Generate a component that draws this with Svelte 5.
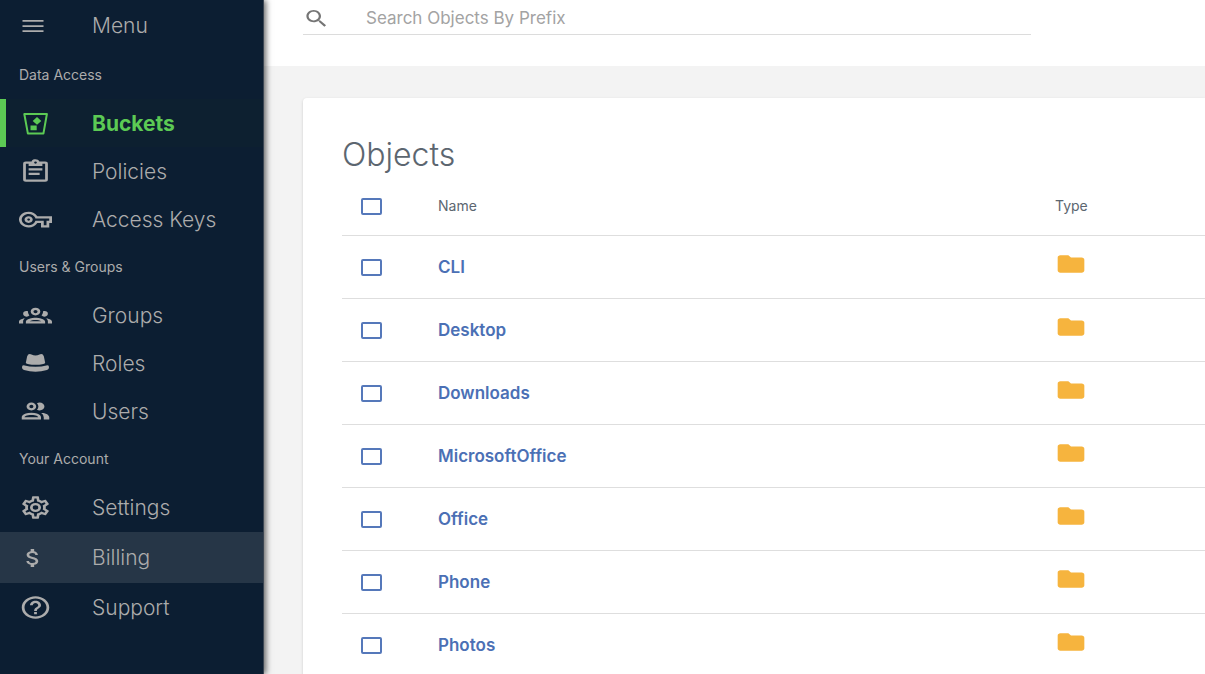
<script>
  const paths = {
    policies: 'M19 3H14.82C14.25 1.44 12.53.64 11 1.2C10.14 1.5 9.5 2.16 9.18 3H5A2 2 0 0 0 3 5V19A2 2 0 0 0 5 21H19A2 2 0 0 0 21 19V5A2 2 0 0 0 19 3M12 3A1 1 0 0 1 13 4A1 1 0 0 1 12 5A1 1 0 0 1 11 4A1 1 0 0 1 12 3M7 7H17V5H19V19H5V5H7V7M17 11H7V9H17V11M15 15H7V13H15V15Z',
    keys: 'M22 19h-6v-4h-2.68c-1.14 2.42-3.6 4-6.32 4-3.86 0-7-3.14-7-7s3.14-7 7-7c2.72 0 5.17 1.58 6.32 4H24v6h-2v4zm-4-2h2v-4h2v-2H11.94l-.23-.67C11.01 8.34 9.11 7 7 7c-2.76 0-5 2.24-5 5s2.24 5 5 5c2.11 0 4.01-1.34 4.71-3.33l.23-.67H18v4zM7 15c-1.65 0-3-1.35-3-3s1.35-3 3-3 3 1.35 3 3-1.35 3-3 3zm0-4c-.55 0-1 .45-1 1s.45 1 1 1 1-.45 1-1-.45-1-1-1z',
    groups: 'M12 5A3.5 3.5 0 0 0 8.5 8.5A3.5 3.5 0 0 0 12 12A3.5 3.5 0 0 0 15.5 8.5A3.5 3.5 0 0 0 12 5M12 7A1.5 1.5 0 0 1 13.5 8.5A1.5 1.5 0 0 1 12 10A1.5 1.5 0 0 1 10.5 8.5A1.5 1.5 0 0 1 12 7M5.5 8A2.5 2.5 0 0 0 3 10.5C3 11.44 3.53 12.25 4.29 12.68C4.65 12.88 5.06 13 5.5 13C5.94 13 6.35 12.88 6.71 12.68C7.08 12.47 7.39 12.17 7.62 11.81C6.89 10.86 6.5 9.7 6.5 8.5C6.5 8.41 6.5 8.31 6.5 8.22C6.2 8.08 5.86 8 5.5 8M18.5 8C18.14 8 17.8 8.08 17.5 8.22C17.5 8.31 17.5 8.41 17.5 8.5C17.5 9.7 17.11 10.86 16.38 11.81C16.5 12 16.63 12.15 16.78 12.3C16.94 12.45 17.1 12.58 17.29 12.68C17.65 12.88 18.06 13 18.5 13C18.94 13 19.35 12.88 19.71 12.68C20.47 12.25 21 11.44 21 10.5A2.5 2.5 0 0 0 18.5 8M12 14C9.66 14 5 15.17 5 17.5V19H19V17.5C19 15.17 14.34 14 12 14M4.71 14.55C2.78 14.78 0 15.76 0 17.5V19H3V17.07C3 16.06 3.69 15.22 4.71 14.55M19.29 14.55C20.31 15.22 21 16.06 21 17.07V19H24V17.5C24 15.76 21.22 14.78 19.29 14.55M12 16C13.53 16 15.24 16.5 16.23 17H7.77C8.76 16.5 10.47 16 12 16Z',
    users: 'M13.07 10.41A5 5 0 0 0 13.07 4.59A3.39 3.39 0 0 1 15 4A3.5 3.5 0 0 1 15 11A3.39 3.39 0 0 1 13.07 10.41M5.5 7.5A3.5 3.5 0 1 1 9 11A3.5 3.5 0 0 1 5.5 7.5M7.5 7.5A1.5 1.5 0 1 0 9 6A1.5 1.5 0 0 0 7.5 7.5M16 17V19H2V17S2 13 9 13 16 17 16 17M14 17C13.86 16.22 12.67 15 9 15S4.07 16.31 4 17M15.95 13A5.32 5.32 0 0 1 18 17V19H22V17S22 13.37 15.94 13Z',
    settings: 'M12 8A4 4 0 0 1 16 12A4 4 0 0 1 12 16A4 4 0 0 1 8 12A4 4 0 0 1 12 8M12 10A2 2 0 0 0 10 12A2 2 0 0 0 12 14A2 2 0 0 0 14 12A2 2 0 0 0 12 10M10 22C9.75 22 9.54 21.82 9.5 21.58L9.13 18.93C8.5 18.68 7.96 18.34 7.44 17.94L4.95 18.95C4.73 19.03 4.46 18.95 4.34 18.73L2.34 15.27C2.21 15.05 2.27 14.78 2.46 14.63L4.57 12.97L4.5 12L4.57 11L2.46 9.37C2.27 9.22 2.21 8.95 2.34 8.73L4.34 5.27C4.46 5.05 4.73 4.96 4.95 5.05L7.44 6.05C7.96 5.66 8.5 5.32 9.13 5.07L9.5 2.42C9.54 2.18 9.75 2 10 2H14C14.25 2 14.46 2.18 14.5 2.42L14.87 5.07C15.5 5.32 16.04 5.66 16.56 6.05L19.05 5.05C19.27 4.96 19.54 5.05 19.66 5.27L21.66 8.73C21.79 8.95 21.73 9.22 21.54 9.37L19.43 11L19.5 12L19.43 13L21.54 14.63C21.73 14.78 21.79 15.05 21.66 15.27L19.66 18.73C19.54 18.95 19.27 19.04 19.05 18.95L16.56 17.95C16.04 18.34 15.5 18.68 14.87 18.93L14.5 21.58C14.46 21.82 14.25 22 14 22H10M11.25 4L10.88 6.61C9.68 6.86 8.62 7.5 7.85 8.39L5.44 7.35L4.69 8.65L6.8 10.2C6.4 11.37 6.4 12.64 6.8 13.8L4.68 15.36L5.43 16.66L7.86 15.62C8.63 16.5 9.68 17.14 10.87 17.38L11.24 20H12.76L13.13 17.39C14.32 17.14 15.37 16.5 16.14 15.62L18.57 16.66L19.32 15.36L17.2 13.81C17.6 12.64 17.6 11.37 17.2 10.2L19.31 8.65L18.56 7.35L16.15 8.39C15.38 7.5 14.32 6.86 13.12 6.62L12.75 4H11.25Z',
    billing: 'M11.8 10.9c-2.27-.59-3-1.2-3-2.15 0-1.09 1.01-1.85 2.7-1.85 1.78 0 2.44.85 2.5 2.1h2.21c-.07-1.72-1.12-3.3-3.21-3.81V3h-3v2.16c-1.94.42-3.5 1.68-3.5 3.61 0 2.31 1.91 3.46 4.7 4.13 2.5.6 3 1.48 3 2.41 0 .69-.49 1.79-2.7 1.79-2.06 0-2.87-.92-2.98-2.1h-2.2c.12 2.19 1.76 3.42 3.68 3.83V21h3v-2.15c1.95-.37 3.5-1.5 3.5-3.55 0-2.84-2.43-3.81-4.7-4.4z',
    support: 'M11 18h2v-2h-2v2zm1-16C6.48 2 2 6.48 2 12s4.48 10 10 10 10-4.48 10-10S17.52 2 12 2zm0 18c-4.41 0-8-3.59-8-8s3.59-8 8-8 8 3.59 8 8-3.59 8-8 8zm0-14c-2.21 0-4 1.79-4 4h2c0-1.1.9-2 2-2s2 .9 2 2c0 2-3 1.75-3 5h2c0-2.25 3-2.5 3-5 0-2.21-1.79-4-4-4z'
  };

  const sections = [
    { label: 'Data Access', items: [['buckets', 'Buckets'], ['policies', 'Policies'], ['keys', 'Access Keys']] },
    { label: 'Users & Groups', items: [['groups', 'Groups'], ['roles', 'Roles'], ['users', 'Users']] },
    { label: 'Your Account', items: [['settings', 'Settings'], ['billing', 'Billing'], ['support', 'Support']] }
  ];

  const objects = ['CLI', 'Desktop', 'Downloads', 'MicrosoftOffice', 'Office', 'Phone', 'Photos'];

  let current = $state('buckets');
  let selected = $state([]);
  let query = $state('');
</script>

{#snippet icon(name)}
  {#if name === 'buckets'}
    <svg class="icon" viewBox="0 0 32 27" aria-hidden="true">
      <path d="M4.8 4H27.4L23.9 23.6H8.4Z" fill="none" stroke="currentColor" stroke-width="2" stroke-linejoin="round" />
      <path d="M17.5 7L21.8 11L17.5 14.8L13.2 11Z M11 15.6H17.2V20.2H11Z" />
    </svg>
  {:else if name === 'roles'}
    <svg class="icon" viewBox="0 0 32 27" aria-hidden="true">
      <path d="M6.3 13L7.6 6.4Q8.7 3.2 12 4.5Q16 6.3 20 4.5Q23.3 3.2 24.4 6.4L25.7 13Q24.5 14.8 16 14.8T6.3 13Z" />
      <path d="M4 15.3Q16 18.4 28 15.3Q29.6 15.3 29.5 17.5Q29.5 19.2 27.5 20Q16 23.6 4.5 20Q2.5 19.2 2.5 17.5Q2.4 15.3 4 15.3Z" />
    </svg>
  {:else}
    <svg class="icon" class:compact={name === 'billing'} viewBox="0 0 24 24" preserveAspectRatio="none" aria-hidden="true">
      <path d={paths[name]} />
    </svg>
  {/if}
{/snippet}

<div class="app">
  <nav class="sidebar" aria-label="Main">
    <button class="item menu" type="button">
      <span class="slot">
        <svg class="icon compact" viewBox="0 0 24 24" preserveAspectRatio="none" aria-hidden="true">
          <path d="M3 18h18v-1.7H3v1.7zm0-5.1h18v-1.7H3v1.7zm0-6.9v1.7h18V6H3z" />
        </svg>
      </span>
      <span>Menu</span>
    </button>
    {#each sections as section}
      <h2 class="label">{section.label}</h2>
      <ul>
        {#each section.items as [id, text]}
          <li>
            <a class="item" class:active={current === id} class:hovered={id === 'billing'} href={'#' + id} onclick={() => (current = id)}>
              <span class="slot">{@render icon(id)}</span>
              <span>{text}</span>
            </a>
          </li>
        {/each}
      </ul>
    {/each}
  </nav>

  <div class="page">
    <header>
      <label class="search">
        <svg viewBox="0 0 24 24" preserveAspectRatio="none" aria-hidden="true">
          <path d="M15.5 14h-.79l-.28-.27C15.41 12.59 16 11.11 16 9.5 16 5.91 13.09 3 9.5 3S3 5.91 3 9.5 5.91 16 9.5 16c1.61 0 3.09-.59 4.23-1.57l.27.28v.79l5 4.99L20.49 19l-4.99-5zm-6 0C7.01 14 5 11.99 5 9.5S7.01 5 9.5 5 14 7.01 14 9.5 11.99 14 9.5 14z" />
        </svg>
        <input type="text" placeholder="Search Objects By Prefix" aria-label="Search Objects By Prefix" bind:value={query} />
      </label>
    </header>

    <main>
      <section class="card">
        <h1>Objects</h1>
        <table>
          <thead>
            <tr>
              <th class="check">
                <input
                  type="checkbox"
                  aria-label="Select all"
                  checked={selected.length === objects.length}
                  onchange={(e) => (selected = e.currentTarget.checked ? [...objects] : [])}
                />
              </th>
              <th>Name</th>
              <th class="type">Type</th>
            </tr>
          </thead>
          <tbody>
            {#each objects as name}
              <tr>
                <td class="check"><input type="checkbox" aria-label={'Select ' + name} value={name} bind:group={selected} /></td>
                <td><a href={'#' + name}>{name}</a></td>
                <td class="type">
                  <svg class="folder" viewBox="0 0 24 24" preserveAspectRatio="none" role="img" aria-label="Folder">
                    <path d="M10 4H4c-1.1 0-1.99.9-1.99 2L2 18c0 1.1.9 2 2 2h16c1.1 0 2-.9 2-2V8c0-1.1-.9-2-2-2h-8l-2-2z" />
                  </svg>
                </td>
              </tr>
            {/each}
          </tbody>
        </table>
      </section>
    </main>
  </div>
</div>

<style>
  :global(body) {
    margin: 0;
    background: #f3f3f3;
    font-family: Inter, Roboto, 'Liberation Sans', sans-serif;
  }

  .app {
    display: flex;
    height: 100vh;
    overflow: hidden;
  }

  .sidebar {
    flex: 0 0 264px;
    box-sizing: border-box;
    border-right: 1px solid #3b4653;
    background: #0c1e32;
    color: #acacac;
    box-shadow: 2px 0 6px rgba(0, 0, 0, 0.6);
    z-index: 1;
  }

  .sidebar ul {
    margin: 0;
    padding: 0;
    list-style: none;
  }

  .item {
    display: flex;
    align-items: center;
    box-sizing: border-box;
    width: 100%;
    height: 48px;
    padding: 0 0 0 19px;
    border: 0;
    background: none;
    color: inherit;
    font-family: inherit;
    font-size: 21px;
    font-weight: 300;
    text-align: left;
    text-decoration: none;
    cursor: pointer;
  }

  .menu {
    height: 51px;
  }

  .slot {
    display: flex;
    flex: 0 0 73px;
  }

  .icon {
    display: block;
    width: 33px;
    height: 27px;
    fill: currentColor;
  }

  .icon.compact {
    width: 28px;
    height: 24px;
  }

  .active {
    padding-left: 13px;
    border-left: 6px solid #5cca54;
    background: #0d2030;
    color: #5cca54;
    font-weight: 700;
  }

  .hovered {
    height: 51px;
    margin-top: 1px;
    background: #263647;
  }

  .label {
    margin: 0;
    padding-left: 19px;
    font-size: 14px;
    font-weight: 400;
    line-height: 48px;
  }

  .page {
    display: flex;
    flex: 1;
    flex-direction: column;
    min-width: 0;
  }

  header {
    flex: none;
    box-sizing: border-box;
    height: 66px;
    padding: 0 174px 0 39px;
    background: #fff;
  }

  .search {
    display: flex;
    align-items: center;
    height: 34px;
    border-bottom: 1px solid #dcdcdc;
  }

  .search svg {
    flex: none;
    width: 27px;
    height: 23px;
    margin-top: 2px;
    fill: #757575;
  }

  .search input {
    flex: 1;
    min-width: 0;
    margin-left: 36px;
    padding: 2px 0 0;
    border: 0;
    outline: 0;
    background: none;
    color: #444;
    font-family: inherit;
    font-size: 17px;
  }

  .search input::placeholder {
    color: #a3a3a3;
  }

  main {
    flex: 1;
    padding: 32px 0 0 39px;
  }

  .card {
    box-sizing: border-box;
    min-height: 100%;
    padding: 36px 0 0 39px;
    border-radius: 4px 0 0 0;
    background: #fff;
    box-shadow: 0 1px 3px rgba(0, 0, 0, 0.16);
  }

  h1 {
    margin: 0;
    color: #5c6670;
    font-size: 32px;
    font-weight: 300;
    line-height: 42px;
  }

  table {
    width: 100%;
    border-collapse: collapse;
    table-layout: fixed;
  }

  th,
  td {
    box-sizing: border-box;
    height: 63px;
    padding: 0;
    border-bottom: 1px solid #dedede;
    text-align: left;
    vertical-align: middle;
  }

  th {
    height: 59px;
    color: #5c6670;
    font-size: 14px;
    font-weight: 400;
  }

  .check {
    width: 96px;
    padding: 2px 0 0 19px;
  }

  .type {
    width: 150px;
  }

  td a {
    color: #4b70b5;
    font-size: 17px;
    font-weight: 600;
    text-decoration: none;
  }

  input[type='checkbox'] {
    display: block;
    box-sizing: border-box;
    width: 21px;
    height: 17px;
    margin: 0;
    border: 2px solid #5578ba;
    border-radius: 2px;
    background: #fff;
    appearance: none;
  }

  input[type='checkbox']:checked {
    background: #5578ba;
  }

  .folder {
    display: block;
    width: 32px;
    height: 26px;
    margin-bottom: 6px;
    fill: #f6b43e;
  }
</style>
